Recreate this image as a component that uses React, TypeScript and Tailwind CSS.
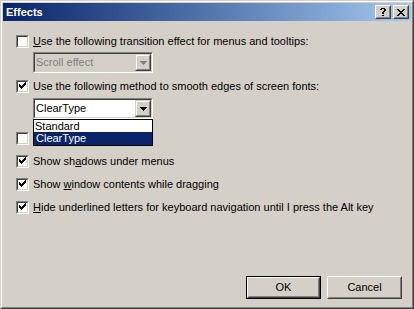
import React from "react";

const FONT = { fontFamily: '"Liberation Sans", Arial, sans-serif' };

function Check() {
  const cols: [number, number][] = [
    [1, 2], [2, 3], [3, 4], [4, 3], [5, 2], [6, 1], [7, 0],
  ];
  return (
    <svg width="9" height="9" viewBox="0 0 9 9" shapeRendering="crispEdges">
      {cols.map(([x, y]) => (
        <rect key={x} x={x} y={y} width="1" height="3" fill="#000" />
      ))}
    </svg>
  );
}

function CheckBox({ checked }: { checked?: boolean }) {
  return (
    <div className="w-[13px] h-[13px] shrink-0 border border-t-[#808080] border-l-[#808080] border-r-white border-b-white">
      <div className="w-full h-full border border-t-[#404040] border-l-[#404040] border-r-[#d4d0c8] border-b-[#d4d0c8] bg-white">
        {checked ? <Check /> : null}
      </div>
    </div>
  );
}

function Row({ checked, children, mt }: { checked?: boolean; children?: React.ReactNode; mt: string }) {
  return (
    <div className={`flex items-center h-[13px] ${mt}`}>
      <CheckBox checked={checked} />
      {children ? (
        <span className="ml-[4px] text-[11px] leading-[13px] whitespace-nowrap text-black">{children}</span>
      ) : null}
    </div>
  );
}

function Arrow({ color }: { color: string }) {
  return (
    <svg width="7" height="4" viewBox="0 0 7 4" shapeRendering="crispEdges">
      <rect x="0" y="0" width="7" height="1" fill={color} />
      <rect x="1" y="1" width="5" height="1" fill={color} />
      <rect x="2" y="2" width="3" height="1" fill={color} />
      <rect x="3" y="3" width="1" height="1" fill={color} />
    </svg>
  );
}

function Combo({ text, disabled }: { text: string; disabled?: boolean }) {
  return (
    <div className="w-[120px] h-[21px] border border-t-[#808080] border-l-[#808080] border-r-white border-b-white">
      <div
        className={`w-full h-full flex border border-t-[#404040] border-l-[#404040] border-r-[#d4d0c8] border-b-[#d4d0c8] ${
          disabled ? "bg-[#d4d0c8]" : "bg-white"
        }`}
      >
        <div
          className={`flex-1 flex items-center pl-[1px] text-[11px] leading-[13px] ${
            disabled ? "text-[#808080]" : "text-black"
          }`}
        >
          {text}
        </div>
        <div className="w-[16px] h-[17px] border border-t-[#d4d0c8] border-l-[#d4d0c8] border-r-[#404040] border-b-[#404040]">
          <div className="w-full h-full flex items-center justify-center border border-t-white border-l-white border-r-[#808080] border-b-[#808080] bg-[#d4d0c8] pt-px">
            <Arrow color={disabled ? "#808080" : "#000"} />
          </div>
        </div>
      </div>
    </div>
  );
}

function Button({ children, isDefault }: { children: React.ReactNode; isDefault?: boolean }) {
  const inner = (
    <div className="w-full h-full border border-t-white border-l-white border-r-[#404040] border-b-[#404040]">
      <div className="w-full h-full flex items-center justify-center border border-t-[#d4d0c8] border-l-[#d4d0c8] border-r-[#808080] border-b-[#808080] bg-[#d4d0c8] text-[11px] text-black">
        {children}
      </div>
    </div>
  );
  return (
    <div className={`w-[75px] h-[23px] ${isDefault ? "border border-black" : ""}`}>{inner}</div>
  );
}

function TitleButton({ children }: { children: React.ReactNode }) {
  return (
    <div className="w-[16px] h-[14px] border border-t-white border-l-white border-r-[#404040] border-b-[#404040]">
      <div className="w-full h-full flex items-center justify-center border border-t-[#d4d0c8] border-l-[#d4d0c8] border-r-[#808080] border-b-[#808080] bg-[#d4d0c8]">
        {children}
      </div>
    </div>
  );
}

function CloseGlyph() {
  const px: [number, number, number][] = [
    [0, 0, 2], [6, 0, 2],
    [1, 1, 2], [5, 1, 2],
    [2, 2, 4],
    [3, 3, 2],
    [2, 4, 4],
    [1, 5, 2], [5, 5, 2],
    [0, 6, 2], [6, 6, 2],
  ];
  return (
    <svg width="8" height="7" viewBox="0 0 8 7" shapeRendering="crispEdges">
      {px.map(([x, y, w], i) => (
        <rect key={i} x={x} y={y} width={w} height="1" fill="#000" />
      ))}
    </svg>
  );
}

function HelpGlyph() {
  const px: [number, number, number][] = [
    [1, 0, 4],
    [0, 1, 2], [4, 1, 2],
    [4, 2, 2],
    [3, 3, 2],
    [2, 4, 2],
    [2, 5, 2],
    [2, 7, 2],
  ];
  return (
    <svg width="6" height="8" viewBox="0 0 6 8" shapeRendering="crispEdges">
      {px.map(([x, y, w], i) => (
        <rect key={i} x={x} y={y} width={w} height="1" fill="#000" />
      ))}
    </svg>
  );
}

export default function App() {
  return (
    <div style={FONT} className="w-[414px] h-[309px] border border-t-[#d4d0c8] border-l-[#d4d0c8] border-r-[#404040] border-b-[#404040] bg-[#d4d0c8]">
      <div className="w-full h-full flex flex-col p-px border border-t-white border-l-white border-r-[#808080] border-b-[#808080]">
        <div className="h-[18px] shrink-0 flex items-center pl-[3px] pr-[2px] bg-linear-to-r from-[#0a246a] to-[#a6caf0]">
          <span className="text-white font-bold text-[11px] leading-[13px]">Effects</span>
          <div className="ml-auto flex gap-[2px]">
            <TitleButton>
              <HelpGlyph />
            </TitleButton>
            <TitleButton>
              <CloseGlyph />
            </TitleButton>
          </div>
        </div>

        <div className="flex-1 flex flex-col pl-[13px]">
          <Row mt="mt-[14px]">
            <span className="underline">U</span>se the following transition effect for menus and tooltips:
          </Row>
          <div className="ml-[17px] mt-[4px]">
            <Combo text="Scroll effect" disabled />
          </div>
          <Row checked mt="mt-[7px]">
            Use the following method to smooth edges of screen fonts:
          </Row>
          <div className="ml-[17px] mt-[5px] relative">
            <Combo text="ClearType" />
            <div className="absolute left-0 top-full w-[120px] h-[27px] z-10 border border-black bg-white flex flex-col text-[11px] leading-[13px]">
              <div className="h-[12px] pl-[1px] text-black flex items-center">Standard</div>
              <div className="h-[13px] pl-[2px] bg-[#0a246a] text-white flex items-center">ClearType</div>
            </div>
          </div>
          <Row mt="mt-[13px]" />
          <Row checked mt="mt-[10px]">
            Show sh<span className="underline">a</span>dows under menus
          </Row>
          <Row checked mt="mt-[10px]">
            Show <span className="underline">w</span>indow contents while dragging
          </Row>
          <Row checked mt="mt-[10px]">
            <span className="underline">H</span>ide underlined letters for keyboard navigation until I press the Alt key
          </Row>

          <div className="mt-auto flex justify-end gap-[6px] pr-[9px] pb-[7px]">
            <Button isDefault>OK</Button>
            <Button>Cancel</Button>
          </div>
        </div>
      </div>
    </div>
  );
}
